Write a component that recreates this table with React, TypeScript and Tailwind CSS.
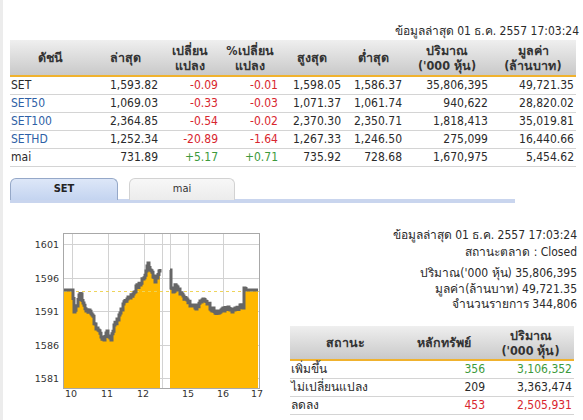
import React from "react";

const F = "font-['Tahoma','DejaVu_Sans_Condensed','Liberation_Sans',sans-serif]";

type Row = { name: string; blue?: boolean; v: string[]; c: ("r" | "g" | "")[] };

const rows: Row[] = [
  { name: "SET", v: ["1,593.82", "-0.09", "-0.01", "1,598.05", "1,586.37", "35,806,395", "49,721.35"], c: ["", "r", "r", "", "", "", ""] },
  { name: "SET50", blue: true, v: ["1,069.03", "-0.33", "-0.03", "1,071.37", "1,061.74", "940,622", "28,820.02"], c: ["", "r", "r", "", "", "", ""] },
  { name: "SET100", blue: true, v: ["2,364.85", "-0.54", "-0.02", "2,370.30", "2,350.71", "1,818,413", "35,019.81"], c: ["", "r", "r", "", "", "", ""] },
  { name: "SETHD", blue: true, v: ["1,252.34", "-20.89", "-1.64", "1,267.33", "1,246.50", "275,099", "16,440.66"], c: ["", "r", "r", "", "", "", ""] },
  { name: "mai", v: ["731.89", "+5.17", "+0.71", "735.92", "728.68", "1,670,975", "5,454.62"], c: ["", "g", "g", "", "", "", ""] },
];

const colorOf = (c: string) => (c === "r" ? "text-[#d8262e]" : c === "g" ? "text-[#3c9a3c]" : "text-[#2a2a2a]");

const gridTop = "grid grid-cols-[80px_70px_60px_60px_63px_61px_86px_86px]";

const morning: [number, number][] = [
  [63, 290], [72, 290], [74, 311], [77, 306], [79, 297], [81, 294], [83, 305], [86, 309], [89, 311], [92, 315], [95, 325], [98, 331], [101, 336], [104, 340], [106, 331], [108, 335], [111, 338], [114, 325], [117, 320], [120, 314], [123, 305], [127, 300], [130, 297], [133, 293], [136, 288], [140, 283], [143, 278], [146, 271], [148, 263], [150, 270], [153, 275], [155, 280], [157, 276], [159, 271], [160, 268],
];
const afternoon: [number, number][] = [
  [170, 272], [171, 287], [173, 292], [176, 284], [178, 288], [180, 292], [183, 297], [187, 302], [190, 304], [193, 307], [197, 307], [200, 303], [203, 300], [207, 302], [210, 307], [213, 310], [217, 312], [220, 310], [224, 310], [228, 308], [232, 310], [236, 310], [240, 307], [243, 306], [244, 289], [246, 290], [258, 290],
];

function hash(n: number) {
  const s = Math.sin(n * 127.1 + 311.7) * 43758.5453;
  return s - Math.floor(s);
}

function series(anchors: [number, number][], seed: number) {
  const pts: [number, number][] = [];
  const x0 = anchors[0][0];
  const x1 = anchors[anchors.length - 1][0];
  let j = 0;
  for (let x = x0; x <= x1; x += 1) {
    while (j < anchors.length - 2 && anchors[j + 1][0] < x) j++;
    const [ax, ay] = anchors[j];
    const [bx, by] = anchors[j + 1];
    const t = bx === ax ? 0 : (x - ax) / (bx - ax);
    let y = ay + (by - ay) * Math.max(0, Math.min(1, t));
    const flat = x < 72 || x > 245;
    if (!flat) {
      y += Math.round((hash(x + seed * 1000) - 0.5) * 5);
    }
    pts.push([x, y]);
  }
  return pts;
}

function stepPath(pts: [number, number][]) {
  let d = `M${pts[0][0]},${pts[0][1]}`;
  for (let i = 1; i < pts.length; i++) {
    d += ` H${pts[i][0]} V${pts[i][1]}`;
  }
  return d;
}

function Chart() {
  const m = series(morning, 1);
  const a = series(afternoon, 3);
  const mLine = stepPath(m);
  const aLine = stepPath(a);
  const base = 388;
  const mFill = `${mLine} V${base} H${m[0][0]} Z`;
  const aFill = `${aLine} V${base} H${a[0][0]} Z`;
  const hLines = [244, 278, 311, 345, 378];
  const vLines = [72, 108, 144, 162, 170, 188, 223];
  const yLabels = ["1601", "1596", "1591", "1586", "1581"];
  const xLabels: [string, number][] = [["10", 71], ["11", 107], ["12", 143], ["15", 188], ["16", 223], ["17", 257]];
  return (
    <svg width="275" height="180" viewBox="0 228 275 180" className="block">
      <rect x="63.5" y="233.5" width="196" height="155" fill="#ffffff" stroke="#a8a8a8" />
      {hLines.map((y) => (
        <line key={y} x1="64" x2="259" y1={y + 0.5} y2={y + 0.5} stroke="#d2d2d2" />
      ))}
      {vLines.map((x) => (
        <line key={x} x1={x + 0.5} x2={x + 0.5} y1="234" y2="388" stroke="#d2d2d2" />
      ))}
      <path d={mFill} fill="#ffb800" />
      <path d={aFill} fill="#ffb800" />
      <line x1="64" x2="259" y1="291.5" y2="291.5" stroke="#eed45a" strokeDasharray="3 3" />
      <path d={mLine} fill="none" stroke="#666666" strokeWidth="3" strokeLinejoin="miter" />
      <path d={aLine} fill="none" stroke="#666666" strokeWidth="3" strokeLinejoin="miter" />
      <line x1="63.5" x2="63.5" y1="233" y2="389" stroke="#a8a8a8" />
      <line x1="63" x2="260" y1="388.5" y2="388.5" stroke="#a8a8a8" />
      {yLabels.map((l, i) => (
        <text key={l} x="59" y={hLines[i] + 3.5} textAnchor="end" fontSize="9.5" fill="#333" fontFamily="DejaVu Sans, sans-serif">
          {l}
        </text>
      ))}
      {xLabels.map(([l, x]) => (
        <text key={l} x={x} y="397" textAnchor="middle" fontSize="9.5" fill="#333" fontFamily="DejaVu Sans, sans-serif">
          {l}
        </text>
      ))}
    </svg>
  );
}

export default function App() {
  const hdr = "bg-gradient-to-b from-[#efefef] to-[#c9c9c9] border-b-[2px] border-[#f0b22e]";
  return (
    <div className={`${F} w-[583px] h-[420px] bg-white border-l-[3px] border-[#ececec] overflow-hidden text-[12px] text-[#2a2a2a]`}>
      <div className="pl-[7px]">
        <div className="pt-[23px] h-[40px] leading-[16px] text-right w-[569px]">ข้อมูลล่าสุด 01 ธ.ค. 2557 17:03:24</div>
        <div className="w-[566px]">
          <div className={`${gridTop} h-[37px] ${hdr} font-bold text-[12.5px] leading-[15px] text-[#333] items-center text-center`}>
            <div>ดัชนี</div>
            <div>ล่าสุด</div>
            <div>เปลี่ยน<br />แปลง</div>
            <div>%เปลี่ยน<br />แปลง</div>
            <div>สูงสุด</div>
            <div>ต่ำสุด</div>
            <div>ปริมาณ<br />('000 หุ้น)</div>
            <div>มูลค่า<br />(ล้านบาท)</div>
          </div>
          {rows.map((r) => (
            <div key={r.name} className={`${gridTop} h-[18px] border-b border-[#d4d4d4] items-center leading-[17px]`}>
              <div className={`pl-[1px] ${r.blue ? "text-[#2f5fa6]" : "text-[#2a2a2a]"}`}>{r.name}</div>
              {r.v.map((v, i) => (
                <div key={i} className={`text-right pr-[2px] ${colorOf(r.c[i])}`}>{v}</div>
              ))}
            </div>
          ))}
        </div>
        <div className="mt-[11px] flex gap-[11px] h-[21px]">
          <div className="w-[108px] h-[22px] rounded-t-[6px] border border-b-0 border-[#95a8c8] bg-gradient-to-b from-[#dde7f8] to-[#c4d4f0] flex items-center justify-center font-bold text-[11px] text-[#222]">SET</div>
          <div className="w-[106px] h-[22px] rounded-t-[6px] border border-b-0 border-[#d2d2d2] bg-gradient-to-b from-[#f7f7f7] to-[#ececec] flex items-center justify-center text-[11px] text-[#333]">mai</div>
        </div>
        <div className="w-[505px] h-[4px] bg-[#c9d5ee]"></div>
      </div>
      <div className="flex">
        <div className="w-[290px] -ml-[3px] pt-[25px]">
          <Chart />
        </div>
        <div className="w-[287px]">
          <div className="pt-[24px] text-right leading-[16px]">
            <div>ข้อมูลล่าสุด 01 ธ.ค. 2557 17:03:24</div>
            <div className="mt-[1px]">สถานะตลาด : Closed</div>
            <div className="mt-[5px]">ปริมาณ('000 หุ้น) 35,806,395</div>
            <div>มูลค่า(ล้านบาท) 49,721.35</div>
            <div className="-mt-[1px]">จำนวนรายการ 344,806</div>
          </div>
          <div className="mt-[14px] w-[284px]">
            <div className={`grid grid-cols-[110px_87px_87px] h-[35px] ${hdr} font-bold text-[12.5px] leading-[15px] text-[#333] items-center text-center`}>
              <div>สถานะ</div>
              <div>หลักทรัพย์</div>
              <div>ปริมาณ<br />('000 หุ้น)</div>
            </div>
            {[
              ["เพิ่มขึ้น", "356", "3,106,352", "text-[#3c9a3c]"],
              ["ไม่เปลี่ยนแปลง", "209", "3,363,474", "text-[#2a2a2a]"],
              ["ลดลง", "453", "2,505,931", "text-[#d8262e]"],
            ].map(([a, b, c, col]) => (
              <div key={a} className="grid grid-cols-[110px_87px_87px] h-[18px] border-b border-[#d4d4d4] items-center leading-[17px]">
                <div className="pl-[1px]">{a}</div>
                <div className={`text-right pr-[2px] ${col}`}>{b}</div>
                <div className={`text-right pr-[2px] ${col}`}>{c}</div>
              </div>
            ))}
          </div>
        </div>
      </div>
    </div>
  );
}
